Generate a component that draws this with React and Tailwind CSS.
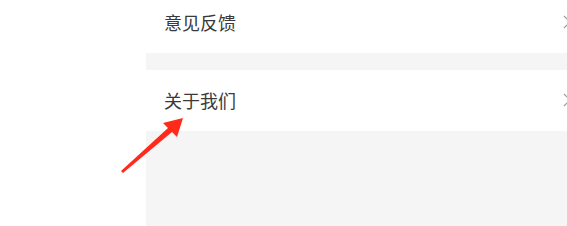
import React from "react";

function Row({ label }) {
  return (
    <div className="flex h-[61px] items-center justify-between bg-white pb-[2px] pl-[18px]">
      <span
        className="text-[18px] leading-none text-[#3a3a3a]"
        style={{ fontFamily: '"Noto Sans CJK SC", "Noto Sans", sans-serif' }}
      >
        {label}
      </span>
      <svg width="14" height="14" viewBox="0 0 14 14" className="mr-[-10px]">
        <path d="M1 1 L7 7 L1 13" fill="none" stroke="#9a9a9a" strokeWidth="1.2" />
      </svg>
    </div>
  );
}

export default function App() {
  return (
    <div className="relative h-[226px] w-[567px] overflow-hidden bg-white">
      <div className="-mt-[8px] ml-[146px] flex w-[421px] flex-col bg-[#f5f5f5]">
        <Row label="意见反馈" />
        <div className="h-[17px] bg-[#f5f5f5]" />
        <Row label="关于我们" />
        <div className="h-[110px] bg-[#f5f5f5]" />
      </div>
      <svg
        className="pointer-events-none absolute left-0 top-0"
        width="567"
        height="226"
        viewBox="0 0 567 226"
      >
        <polygon
          points="121,171 168,128 163,123 183,118 177,137 172,132 123,173"
          fill="#ff2a1a"
        />
      </svg>
    </div>
  );
}
